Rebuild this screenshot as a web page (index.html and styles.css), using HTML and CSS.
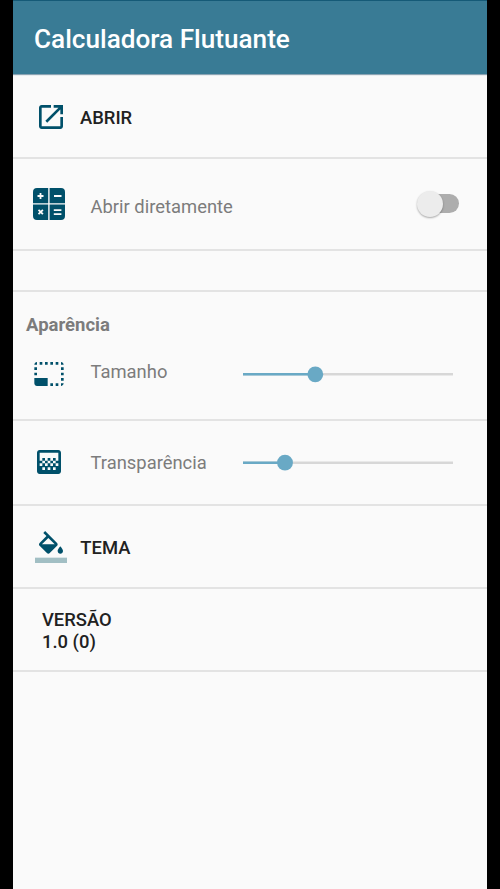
FILE: index.html
```html
<!DOCTYPE html>
<html lang="pt">
<head>
<meta charset="utf-8">
<meta name="viewport" content="width=device-width">
<title>Calculadora Flutuante</title>
<link rel="stylesheet" href="styles.css">
</head>
<body>
<main class="screen">
  <header class="bar"><h1 class="title">Calculadora Flutuante</h1></header>
  <section class="row row-open">
    <svg class="icon" viewBox="0 0 24 24"><path d="M19 19H5V5h7V3H5c-1.11 0-2 .9-2 2v14c0 1.1.89 2 2 2h14c1.1 0 2-.9 2-2v-7h-2v7zM14 3v2h3.59l-9.83 9.83 1.41 1.41L19 6.41V10h2V3h-7z"/></svg>
    <span class="action action-open">ABRIR</span>
  </section>
  <section class="row row-direct">
    <svg class="icon" viewBox="0 0 32 32">
      <path d="M4 0H15.2V15.2H0V4Q0 0 4 0ZM16.6 0H28Q32 0 32 4V15.2H16.6ZM0 16.6H15.2V32H4Q0 32 0 28ZM16.6 16.6H32V28Q32 32 28 32H16.6Z"/>
      <path class="sign" d="M4.5 8h6M7.5 5v6M21 8h7.5M5.5 21.8l4.4 4.4M9.9 21.8l-4.4 4.4M20.8 22.2h7.6M20.8 26.2h7.6"/>
    </svg>
    <span class="label label-direct">Abrir diretamente</span>
    <span class="switch"><span class="knob"></span></span>
  </section>
  <section class="row row-gap"></section>
  <section class="row row-look">
    <h2 class="heading">Aparência</h2>
    <div class="line">
      <svg class="icon" viewBox="0 0 24 24"><path d="M23 15h-2v2h2v-2zm0-4h-2v2h2v-2zm0 8h-2v2c1 0 2-1 2-2zM15 3h-2v2h2V3zm8 4h-2v2h2V7zm-2-4v2h2c0-1-1-2-2-2zM3 21h8v-6H1v4c0 1.1.9 2 2 2zM3 7H1v2h2V7zm12 12h-2v2h2v-2zm4-16h-2v2h2V3zm0 16h-2v2h2v-2zM3 3C2 3 1 4 1 5h2V3zm0 8H1v2h2v-2zm8-8H9v2h2V3zM7 3H5v2h2V3z"/></svg>
      <span class="label label-size">Tamanho</span>
      <svg class="slider" viewBox="0 0 210 18"><path class="track" d="M0 9.3h210"/><path class="fill" d="M0 9.3h72"/><circle cx="72.3" cy="9.3" r="7.9"/></svg>
    </div>
  </section>
  <section class="row row-alpha">
    <svg class="icon" viewBox="0 0 24 24"><path d="M11 9h2v2h-2zm-2 2h2v2H9zm4 0h2v2h-2zm2-2h2v2h-2zM7 9h2v2H7zm12-6H5c-1.1 0-2 .9-2 2v14c0 1.1.9 2 2 2h14c1.1 0 2-.9 2-2V5c0-1.1-.9-2-2-2zM9 18H7v-2h2v2zm4 0h-2v-2h2v2zm4 0h-2v-2h2v2zm2-7h-2v2h2v2h-2v-2h-2v2h-2v-2h-2v2H9v-2H7v2H5v-2h2v-2H5V5h14v6z"/></svg>
    <span class="label label-alpha">Transparência</span>
    <svg class="slider" viewBox="0 0 210 18"><path class="track" d="M0 9.7h210"/><path class="fill" d="M0 9.7h42"/><circle cx="42" cy="9.7" r="7.9"/></svg>
  </section>
  <section class="row row-theme">
    <svg class="icon" viewBox="0 0 24 24"><path d="M16.56 8.94L7.62 0 6.21 1.41l2.38 2.38-5.15 5.15c-.59.59-.59 1.54 0 2.12l5.5 5.5c.29.29.68.44 1.06.44s.77-.15 1.06-.44l5.5-5.5c.59-.58.59-1.53 0-2.12zM5.21 10L10 5.21 14.79 10H5.21zM19 11.5s-2 2.17-2 3.5c0 1.1.9 2 2 2s2-.9 2-2c0-1.33-2-3.5-2-3.5z"/><path class="swatch" d="M0 20h24v4H0z"/></svg>
    <span class="action action-theme">TEMA</span>
  </section>
  <section class="row row-version">
    <p class="version">VERSÃO<br>1.0 (0)</p>
  </section>
</main>
</body>
</html>
```
FILE: styles.css
```css
* { box-sizing: border-box; }
body { margin: 0; background: #000; font-family: Roboto, sans-serif; }
.screen { width: 474px; height: 889px; margin-left: 13px; background: #fafafa; overflow: hidden; }
.bar {
  height: 74px; padding: 23px 0 0 21px;
  background: #397b95; border-top: 1px solid #155a77;
  box-shadow: 0 1px 1px #8aa3b3;
}
.title { margin: 0; font-size: 26.15px; line-height: 30px; font-weight: 500; color: #fff; white-space: nowrap; }
.row { display: flex; align-items: flex-start; border-bottom: 2px solid #e3e3e3; white-space: nowrap; }
.icon { width: 32px; height: 32px; flex: none; fill: #00506a; }
.sign { fill: none; stroke: #fafafa; stroke-width: 1.8; }
.swatch { fill: #a2bfc4; }
.action, .version { font-size: 18.4px; line-height: 22px; font-weight: 500; color: #212121; }
.label { width: 152px; margin-left: 26px; font-size: 18.4px; line-height: 22px; color: #7c7c7c; }
.row-open { height: 85px; padding: 26.5px 0 0 22px; }
.action-open { margin: 6.5px 0 0 13px; }
.row-direct { height: 92px; padding: 29px 28px 0 19.5px; }
.label-direct { margin-top: 8px; }
.switch { position: relative; width: 42px; height: 28px; margin: 3px 0 0 auto; }
.switch::before { content: ""; position: absolute; left: 6px; right: 0; top: 3px; height: 19px; border-radius: 10px; background: #adadad; }
.knob { position: absolute; left: 0; top: -0.5px; width: 26px; height: 26px; border-radius: 50%; background: #ececec; box-shadow: 0 1px 2px #0005; }
.row-gap { height: 41px; }
.row-look { height: 129px; display: block; padding-top: 22px; }
.heading { margin: 0 0 22px 13px; font-size: 18.5px; line-height: 22px; font-weight: 700; color: #7c7c7c; }
.line { display: flex; align-items: flex-start; padding-left: 19.5px; }
.label-size { margin-top: 3px; }
.slider { width: 210px; height: 18px; margin-top: 7px; flex: none; fill: #69a9c5; }
.track, .fill { fill: none; stroke-width: 2.6; stroke: #d7d7d7; }
.fill { stroke: #69a9c5; }
.row-alpha { height: 85px; padding: 25px 0 0 19.5px; }
.label-alpha { margin-top: 6px; }
.row-theme { height: 83px; padding: 25px 0 0 22.3px; }
.action-theme { margin: 6px 0 0 13px; }
.row-version { height: 83px; padding: 20px 0 0 29px; }
.version { margin: 0; }
```
